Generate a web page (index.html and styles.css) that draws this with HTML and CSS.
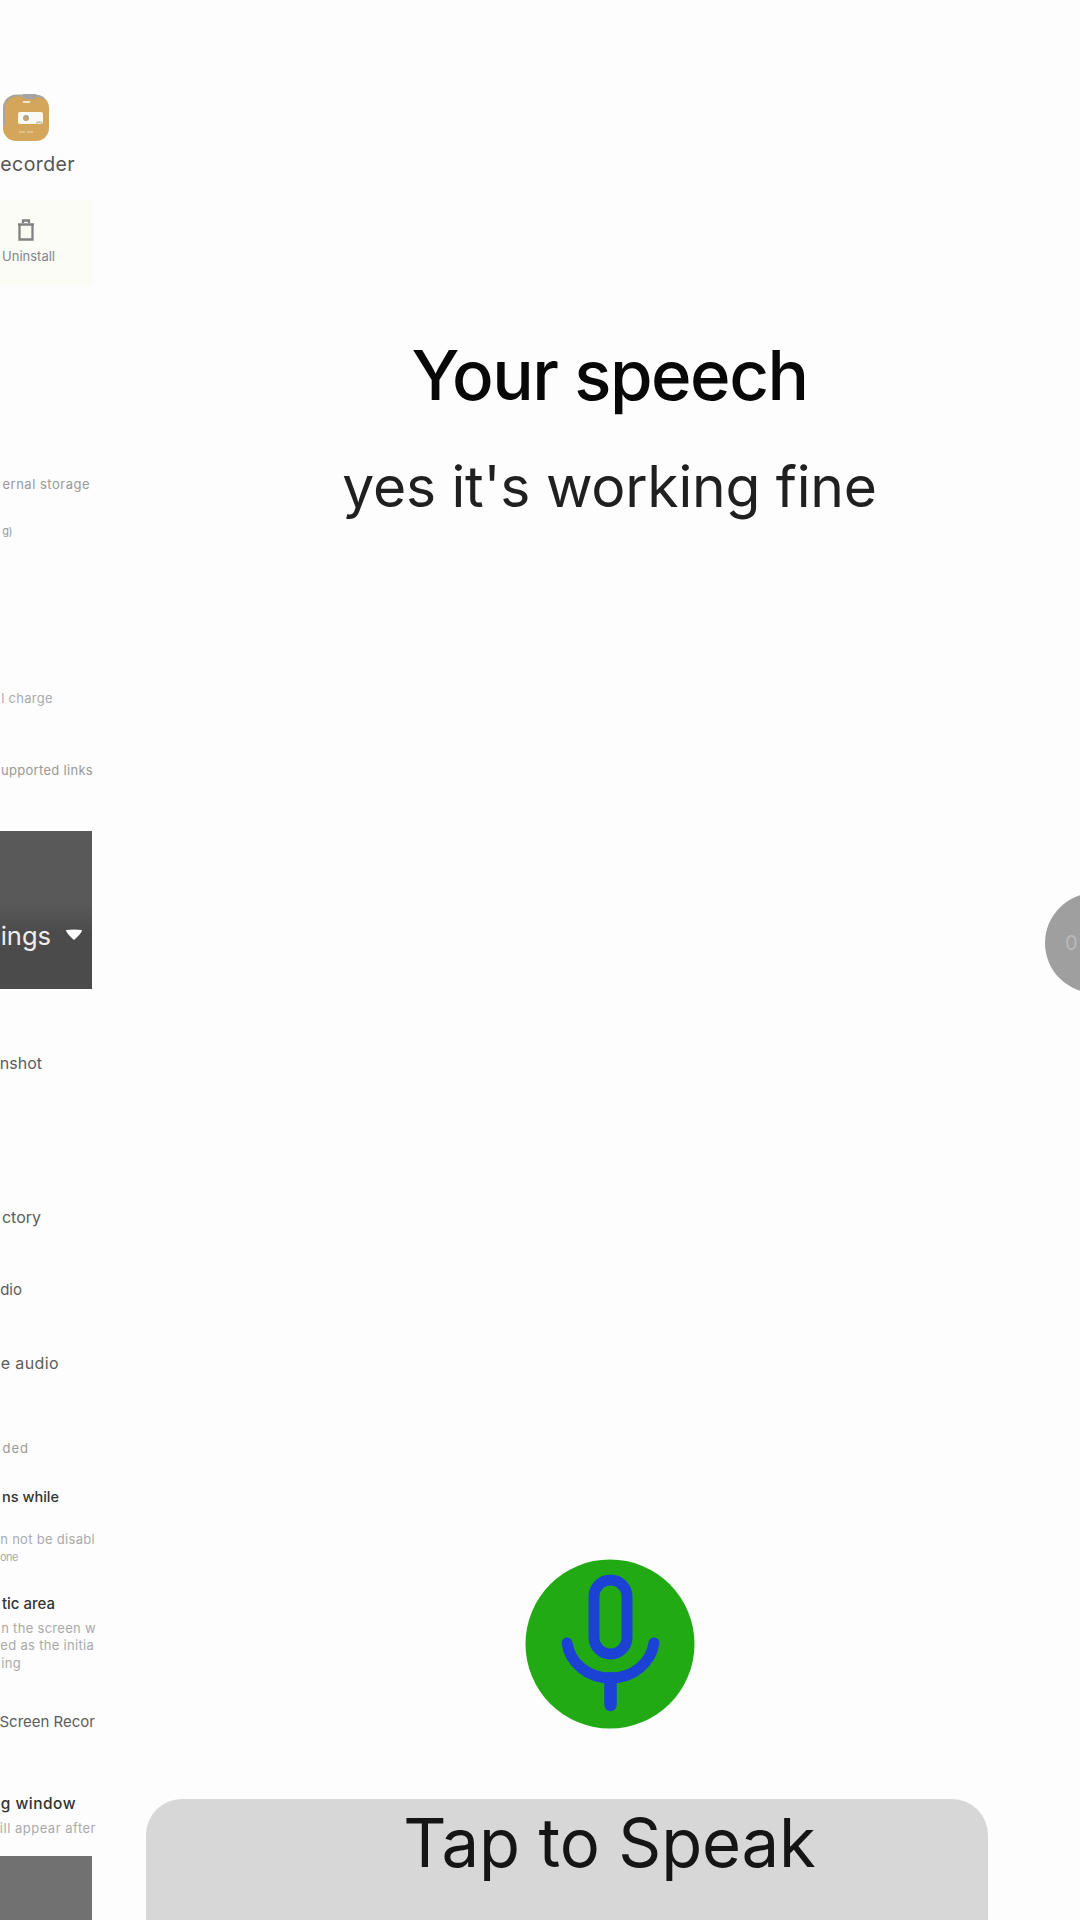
FILE: index.html
```html
<!DOCTYPE html>
<html lang="en">
<head>
<meta charset="utf-8">
<title>Your speech</title>
<link rel="stylesheet" href="styles.css">
</head>
<body>
<div class="screen">
  <aside class="strip">
    <svg class="app-icon" viewBox="0 0 48 48">
      <rect x="1" y="1" width="46" height="46" rx="13" fill="#d3a65c"/>
      <path d="M2 32V14Q3 3 14 1.500H34Q39 2 42 5" fill="none" stroke="#a9a59f" stroke-width="2"/>
      <path d="M21 2.500h13" stroke="#a5a4a2" stroke-width="5"/>
      <path d="M21 8h7" stroke="#eee3cc" stroke-width="2"/>
      <rect x="16" y="18" width="25" height="12" rx="2" fill="#fafaf4"/>
      <circle cx="24" cy="24" r="3" fill="#aaa88d"/>
      <circle cx="24" cy="25" r="1.400" fill="#d3a65c"/>
      <path d="M34 29l3-1 3 1" fill="none" stroke="#c9c5b6" stroke-width="2"/>
      <path d="M17 38h6m2 0h6" stroke="#e6c797" stroke-width="1.500"/>
    </svg>
    <p class="line app-name">ecorder</p>
    <div class="uninstall">
      <svg class="trash" viewBox="0 0 18 24"><path d="M1 6.500h16M6 5V2.500h6V5M2.500 7v14.500h13V7" fill="none" stroke="#818181" stroke-width="2.300"/></svg>
      <p class="line small uninstall-label">Uninstall</p>
    </div>
    <p class="line small storage">ernal storage</p>
    <p class="line small count">g)</p>
    <p class="line small faint charge">l charge</p>
    <p class="line small links">upported links</p>
    <div class="settings">
      <span class="settings-label">ings</span>
      <svg class="caret" viewBox="0 0 18 12"><path d="M1 1Q9 0 17 1Q17 4 9 11Q1 4 1 1Z" fill="#fff"/></svg>
    </div>
    <p class="line item screenshot">nshot</p>
    <p class="line item directory">ctory</p>
    <p class="line item audio">dio</p>
    <p class="line item record-audio">e audio</p>
    <p class="line small recorded">ded</p>
    <p class="line item strong buttons">ns while</p>
    <p class="line small faint disabled">n not be disabl</p>
    <p class="line small faint phone">one</p>
    <p class="line item strong area">tic area</p>
    <p class="line small faint screen-w">n the screen w</p>
    <p class="line small faint initial">ed as the initia</p>
    <p class="line small faint recording">ing</p>
    <p class="line item recor">Screen Recor</p>
    <p class="line item strong window">g window</p>
    <p class="line small faint after">ill appear after</p>
    <div class="footer"></div>
  </aside>
  <main class="speech">
    <h1 class="title">Your speech</h1>
    <p class="result">yes it's working fine</p>
    <svg class="mic" viewBox="0 0 170 170">
      <circle cx="85" cy="85" r="84.500" fill="#22aa14"/>
      <g fill="none" stroke="#1b42d5" stroke-width="11" stroke-linecap="round">
        <rect x="69" y="21" width="33" height="74" rx="16.500"/>
        <path d="M42 84C45 104 63 119 85.500 119S126 104 129 84"/>
        <path d="M85.500 119v27" stroke-width="12.500"/>
      </g>
    </svg>
    <button class="speak">Tap to Speak</button>
  </main>
  <div class="timer">0</div>
</div>
</body>
</html>
```
FILE: styles.css
```css
* { box-sizing: border-box; }
body { margin: 0; background: #fdfdfd; font-family: Inter, "Liberation Sans", sans-serif; }
p, h1 { margin: 0; font-weight: 400; }
.screen { position: relative; display: flex; width: 1080px; height: 1920px; overflow: hidden; background: #fdfdfd; }

/* Neighbouring settings screens along the left edge */
.strip { display: flex; flex-direction: column; align-items: flex-end; width: 96px; height: 1920px; overflow: hidden; flex: none; }
.strip > * { flex: none; }
.line { height: 20px; line-height: 20px; white-space: nowrap; }
.app-icon { width: 48px; height: 48px; margin: 94px 46px 0 0; }
.app-name { margin: 12px 21px 0 0; font-size: 19.5px; letter-spacing: 0.4px; color: #555; }
.uninstall { display: flex; flex-direction: column; align-items: flex-end; width: 96px; height: 85px; margin-top: 26px; padding-top: 18px; background: linear-gradient(90deg, #fbfcf6 94%, #fdfdfd 98%); }
.trash { width: 18px; height: 24px; margin-right: 61px; }
.small { font-size: 13px; color: #999; letter-spacing: 0.3px; }
.faint { color: #aaa; }
.uninstall-label { margin: 4px 41px 0 0; color: #858585; letter-spacing: 0; }
.storage { margin: 189px 6px 0 0; letter-spacing: 0.5px; }
.count { margin: 27px 84px 0 0; font-size: 11px; letter-spacing: -0.5px; }
.charge { margin: 147px 43px 0 0; }
.links { margin: 52px 3px 0 0; }
.settings { display: flex; justify-content: flex-end; align-items: center; gap: 14px; width: 92px; height: 158px; margin: 51px 4px 0 0; padding: 50px 9px 0 0; background: linear-gradient(#595959 45%, #4b4b4b 65%); color: #eee; font-size: 25.5px; }
.caret { width: 18px; height: 12px; flex: none; }
.item { font-size: 16px; color: #5c5c5c; }
.strong { color: #333; font-weight: 500; font-size: 15.5px; }
.screenshot { margin: 64px 54px 0 0; }
.directory { margin: 134px 55px 0 0; }
.audio { margin: 53px 74px 0 0; font-size: 15px; }
.record-audio { margin: 53px 37px 0 0; letter-spacing: 0.4px; }
.recorded { margin: 65px 67px 0 0; letter-spacing: 1px; }
.buttons { margin: 29px 37px 0 0; font-size: 14.5px; }
.disabled { margin: 22px 1px 0 0; }
.phone { margin: -2px 78px 0 0; font-size: 11px; letter-spacing: -0.5px; }
.area { margin: 27px 41px 0 0; font-size: 15px; }
.screen-w { margin: 4px 0 0; }
.initial { margin: -3px 2px 0 0; }
.recording { margin: -2px 75px 0 0; }
.recor { margin: 39px 1px 0 0; font-size: 15px; }
.window { margin: 62px 20px 0 0; letter-spacing: 0.5px; }
.after { margin: 4px 0 0; letter-spacing: 0.5px; }
.footer { width: 92px; height: 64px; margin: 18px 4px 0 0; background: #717171; }

.speech { display: flex; flex-direction: column; align-items: center; width: 941px; margin-left: 43px; padding-top: 335px; flex: none; }
.title { height: 80px; line-height: 80px; font-size: 69px; font-weight: 500; color: #080808; white-space: nowrap; letter-spacing: -1.5px; }
.result { height: 70px; margin-top: 37px; line-height: 70px; font-size: 57px; color: #202020; white-space: nowrap; letter-spacing: -0.25px; }
.mic { width: 170px; height: 170px; margin-top: 1037px; flex: none; }
.speak { width: 842px; height: 140px; flex: none; align-self: flex-start; margin: 70px 0 -20px 7px; padding: 6px 0 0 85px; display: flex; align-items: flex-start; justify-content: center; border: 0; border-radius: 36px 36px 0 0; background: #d7d7d7; color: #151515; font: 400 67px/76px Inter, "Liberation Sans", sans-serif; letter-spacing: -0.15px; white-space: nowrap; }

/* Floating recording timer, half off screen */
.timer { position: absolute; left: 1045px; top: 893px; width: 100px; height: 100px; padding-left: 20px; border-radius: 50%; background: #9f9f9f; color: #b9b9b9; font-size: 20px; line-height: 100px; }
```
